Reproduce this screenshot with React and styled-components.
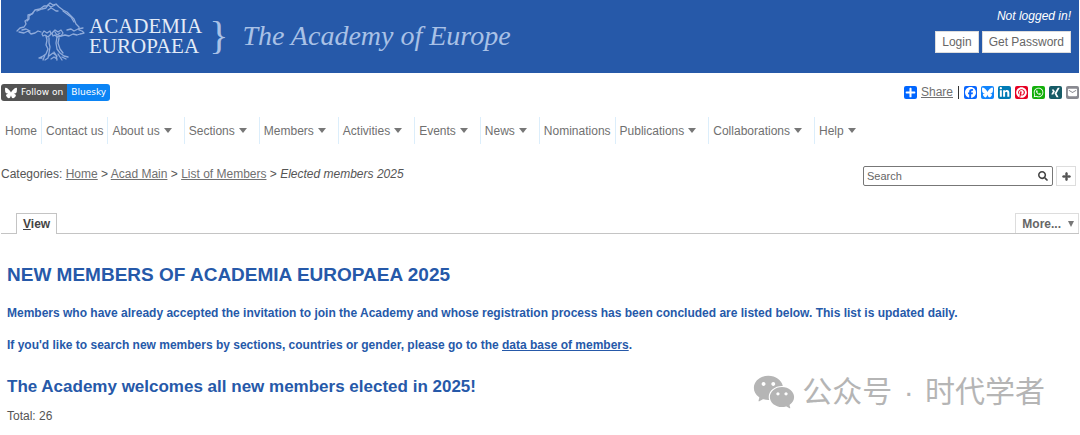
import React from "react"
import styled, { createGlobalStyle } from "styled-components"
import { FaPlus, FaSearch } from "react-icons/fa"
import {
  FaBluesky,
  FaFacebook,
  FaLinkedinIn,
  FaPinterest,
  FaWhatsapp,
  FaXing,
} from "react-icons/fa6"
import { MdEmail } from "react-icons/md"
import { AiFillWechat } from "react-icons/ai"

const GlobalStyle = createGlobalStyle`
  :root {
    --color-brand: #2659a9;
    --color-text: #555;
    --color-link: #707070;
    --color-line: #c4c4c4;
  }
  * {
    box-sizing: border-box;
  }
  body {
    margin: 0;
    background: #fff;
    color: var(--color-text);
    font-family: "Liberation Sans", Arial, sans-serif;
    font-size: 12px;
    line-height: 16px;
  }
  a {
    color: var(--color-link);
  }
  button, input {
    font: inherit;
  }
`

const Page = styled.div`
  position: relative;
  padding: 0 1px;
`

const Header = styled.header`
  display: flex;
  justify-content: space-between;
  align-items: flex-start;
  height: 73px;
  padding: 0 8px 0 14px;
  background: var(--color-brand);
`

const Brand = styled.a`
  display: flex;
  align-items: center;
  height: 72px;
  color: #e3ebf7;
  font-family: "Liberation Serif", "Times New Roman", serif;
  text-decoration: none;

  svg {
    width: 72px;
    height: 62px;
    margin: 0 2px 8px 0;
  }
`

const BrandName = styled.span`
  font-size: 21px;
  line-height: 20px;

  span {
    display: block;
  }
`

const BrandBrace = styled.span`
  padding: 0 14px 0 7px;
  color: #a9c1e6;
  font-size: 40px;
  line-height: 40px;
`

const Tagline = styled.span`
  color: #a9c1e6;
  font-size: 28px;
  font-style: italic;
  line-height: 32px;
`

const Account = styled.div`
  display: flex;
  flex-direction: column;
  align-items: flex-end;
  gap: 7px;
  padding-top: 8px;
  color: #fff;
`

const AccountButtons = styled.div`
  display: flex;
  gap: 3px;
`

const AccountButton = styled.button`
  height: 22px;
  padding: 0 6px;
  border: 1px solid #ddd;
  background: #fff;
  color: #666;
`

const SocialBar = styled.div`
  display: flex;
  justify-content: space-between;
  align-items: center;
  padding: 11px 0 7px;
`

const FollowButton = styled.a`
  display: flex;
  overflow: hidden;
  border-radius: 3px;
  font-family: "DejaVu Sans", Verdana, sans-serif;
  font-size: 9px;
  line-height: 17px;
  color: #fff;
  text-decoration: none;
`

const FollowPart = styled.span`
  display: flex;
  align-items: center;
  gap: 4px;
  padding: 0 4px;
  background: ${props => (props.$accent ? "#0b84f5" : "#535353")};
`

const ShareList = styled.div`
  display: flex;
  align-items: center;
  gap: 4px;
`

const ShareLink = styled.a`
  display: flex;
  align-items: center;
  gap: 4px;
  padding-right: 5px;
  margin-right: 1px;
  border-right: 1px solid #333;
  line-height: 13px;
`

const ShareIcon = styled.span`
  display: flex;
  align-items: center;
  justify-content: center;
  width: 13px;
  height: 13px;
  border-radius: 2px;
  background: ${props => props.$color};
  color: #fff;
  font-size: 11px;
`

const Nav = styled.nav`
  display: flex;
  padding-top: 9px;
`

const NavItem = styled.a`
  display: flex;
  align-items: center;
  gap: 4px;
  height: 27px;
  padding: 0 ${props => (props.$menu ? "12px" : "4px")} 0 4px;
  border-right: 1px solid #dceefb;
  text-decoration: none;
  white-space: nowrap;

  &:last-child {
    border-right: 0;
  }
`

const Caret = styled.span`
  border: 4px solid transparent;
  border-top: 5px solid #777;
  border-bottom-width: 0;
`

const CategoryBar = styled.div`
  display: flex;
  justify-content: space-between;
  align-items: flex-start;
  padding: 22px 3px 0 0;
`

const SearchForm = styled.form`
  display: flex;
  gap: 3px;
`

const SearchBox = styled.label`
  display: flex;
  align-items: center;
  width: 190px;
  height: 20px;
  padding: 0 4px 0 3px;
  border: 1px solid #777;
  border-radius: 2px;
  color: #444;
  font-size: 10px;
`

const SearchInput = styled.input`
  flex: 1;
  min-width: 0;
  padding: 0;
  border: 0;
  outline: 0;
  background: none;
  font-size: 11px;

  &::placeholder {
    color: #666;
  }
`

const AddButton = styled.button`
  display: flex;
  align-items: center;
  justify-content: center;
  width: 20px;
  height: 20px;
  padding: 0;
  border: 1px solid #ddd;
  background: #fff;
  color: #555;
  font-size: 9px;

  svg {
    stroke: currentColor;
    stroke-width: 40px;
  }
`

const Tabs = styled.div`
  display: flex;
  justify-content: space-between;
  margin-top: 27px;
  padding-left: 15px;
  border-bottom: 1px solid var(--color-line);
`

const Tab = styled.button`
  display: flex;
  align-items: center;
  gap: 7px;
  height: ${props => (props.$active ? "21px" : "20px")};
  margin-bottom: ${props => (props.$active ? "-1px" : "0")};
  padding: 0 6px;
  border: 1px solid ${props => (props.$active ? "var(--color-line)" : "#ddd")};
  border-bottom: 0;
  background: #fff;
  color: ${props => (props.$active ? "#444" : "#666")};
  font-weight: bold;
`

const MoreArrow = styled.span`
  margin-right: -2px;
  border: 3px solid transparent;
  border-top: 6px solid #777;
  border-bottom: 0;
`

const Content = styled.main`
  padding: 29px 6px 11px;

  h1, h2, p {
    margin: 0;
  }
`

const Title = styled.h1`
  padding-bottom: 2px;
  color: var(--color-brand);
  font-size: 19px;
  line-height: 24px;
`

const Notice = styled.p`
  padding-top: 16px;
  color: var(--color-brand);
  font-weight: bold;

  a {
    color: inherit;
  }
`

const Welcome = styled.h2`
  padding: 24px 0 11px;
  color: var(--color-brand);
  font-size: 17px;
  line-height: 20px;
`

const Watermark = styled.div`
  position: absolute;
  right: 35px;
  bottom: 20px;
  display: flex;
  align-items: center;
  gap: 5px;
  color: #b5b5b5;
  font-family: "Liberation Sans", "Noto Sans CJK SC", sans-serif;
  font-size: 30px;
  line-height: 40px;

  svg {
    width: 46px;
    height: 46px;
  }
`

const WatermarkDot = styled.span`
  padding: 0 3px;
`

const TreeLogo = () => (
  <svg
    viewBox="0 0 72 62"
    fill="none"
    stroke="#8fabdb"
    strokeWidth="1.3"
    strokeLinecap="round"
    strokeLinejoin="round"
  >
    <path d="M2 30l3-3 4-1 2-3-1-3 3-2 0-4 4-1 3-4 5-1 4-3 3 0 3-3 3 2 3-1 3 3 4 3 4 2 4 4 3 3 2 5 3 3 0 3 3 1 2 2-4 1-3 1-4-1-4 2-4-1-4 1-3-1" />
    <path d="M4 31l5 1 4-2 3 3 4-1 3-2 3 1M7 29l4-1 4 2M12 20l2-2 0-3 4-3M22 10l5-2 4-1 2-3 3 2 4-2M33 9l3-2 2 1 3 2 2 0M48 10l4 3 4 3 3 5M52 29l4-1 3 2 4-2 5-1" />
    <path d="M27 33l2-3 3 2 3-2 1 3-3 3-3-2-2 1zM37 32l3-3 3 2 3-2 2 3-2 3-4 1-2-2-2 1zM40 31l2 3 3-2" />
    <path d="M31 35l1 4-1 5 2 4-2 5-3 2-4 2M34 37l0 5 1 4-1 6M42 36l-1 6 1 6 3 4 4 3 4 1M44 37l-1 5 2 6 3 4M30 54l-2 5M34 52l-1 5-3 2M39 51l2 3 1 5M43 53l4 6M34 55l4-3 4 3M24 57l3 0M36 58l3-2 3 2M47 56l4 2" />
  </svg>
)

const navItems = [
  { label: "Home" },
  { label: "Contact us" },
  { label: "About us", menu: true },
  { label: "Sections", menu: true },
  { label: "Members", menu: true },
  { label: "Activities", menu: true },
  { label: "Events", menu: true },
  { label: "News", menu: true },
  { label: "Nominations" },
  { label: "Publications", menu: true },
  { label: "Collaborations", menu: true },
  { label: "Help", menu: true },
]

const shareIcons = [
  { name: "Facebook", color: "#0866ff", icon: <FaFacebook /> },
  { name: "Bluesky", color: "#1185fe", icon: <FaBluesky /> },
  { name: "LinkedIn", color: "#007bb5", icon: <FaLinkedinIn /> },
  { name: "Pinterest", color: "#e60023", icon: <FaPinterest /> },
  { name: "WhatsApp", color: "#12af0a", icon: <FaWhatsapp /> },
  { name: "XING", color: "#165b66", icon: <FaXing /> },
  { name: "Email", color: "#888990", icon: <MdEmail /> },
]

const App = () => (
  <Page>
    <GlobalStyle />
    <Header>
      <Brand href="#">
        <TreeLogo />
        <BrandName>
          <span>ACADEMIA</span>
          <span>EUROPAEA</span>
        </BrandName>
        <BrandBrace>{"}"}</BrandBrace>
        <Tagline>The Academy of Europe</Tagline>
      </Brand>
      <Account>
        <em>Not logged in!</em>
        <AccountButtons>
          <AccountButton>Login</AccountButton>
          <AccountButton>Get Password</AccountButton>
        </AccountButtons>
      </Account>
    </Header>

    <SocialBar>
      <FollowButton href="#">
        <FollowPart>
          <FaBluesky size={12} />
          Follow on
        </FollowPart>
        <FollowPart $accent>Bluesky</FollowPart>
      </FollowButton>
      <ShareList>
        <ShareLink href="#">
          <ShareIcon $color="#0166ff">
            <FaPlus />
          </ShareIcon>
          Share
        </ShareLink>
        {shareIcons.map(({ name, color, icon }) => (
          <a href="#" key={name} aria-label={name}>
            <ShareIcon $color={color}>{icon}</ShareIcon>
          </a>
        ))}
      </ShareList>
    </SocialBar>

    <Nav>
      {navItems.map(({ label, menu }) => (
        <NavItem href="#" key={label} $menu={menu}>
          {label}
          {menu && <Caret />}
        </NavItem>
      ))}
    </Nav>

    <CategoryBar>
      <div>
        Categories: <a href="#">Home</a> &gt; <a href="#">Acad Main</a> &gt;{" "}
        <a href="#">List of Members</a> &gt; <em>Elected members 2025</em>
      </div>
      <SearchForm>
        <SearchBox>
          <SearchInput type="text" placeholder="Search" aria-label="Search" />
          <FaSearch />
        </SearchBox>
        <AddButton type="button" aria-label="Advanced search">
          <FaPlus />
        </AddButton>
      </SearchForm>
    </CategoryBar>

    <Tabs>
      <Tab $active>
        <span>
          <u>V</u>iew
        </span>
      </Tab>
      <Tab>
        More...
        <MoreArrow />
      </Tab>
    </Tabs>

    <Content>
      <Title>NEW MEMBERS OF ACADEMIA EUROPAEA 2025</Title>
      <Notice>
        Members who have already accepted the invitation to join the Academy and whose registration
        process has been concluded are listed below. This list is updated daily.
      </Notice>
      <Notice>
        If you'd like to search new members by sections, countries or gender, please go to the{" "}
        <a href="#">data base of members</a>.
      </Notice>
      <Welcome>The Academy welcomes all new members elected in 2025!</Welcome>
      <p>Total: 26</p>
    </Content>

    <Watermark>
      <AiFillWechat />
      <span>
        公众号 <WatermarkDot>·</WatermarkDot> 时代学者
      </span>
    </Watermark>
  </Page>
)

export default App
